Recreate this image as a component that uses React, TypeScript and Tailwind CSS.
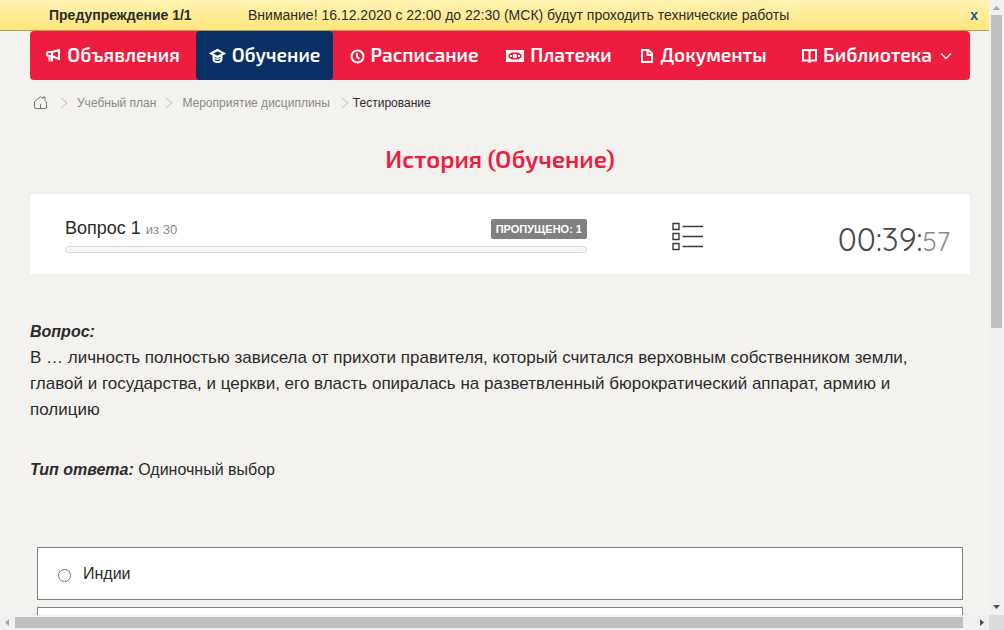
import React from 'react';

interface NavItem {
  label: string;
  icon: React.ReactNode;
  active?: boolean;
  dropdown?: boolean;
}

const iconProps = {
  fill: 'none',
  stroke: 'currentColor',
  strokeWidth: 2,
  className: 'shrink-0',
};

const navItems: NavItem[] = [
  {
    label: 'Объявления',
    icon: (
      <svg width="15" height="16" viewBox="0 0 15 16" {...iconProps}>
        <path d="M6 4H3a2 2 0 0 0 0 4h3zM6 4l7-2v9L6 8M3.500 8v5.500M6 8v5.500" />
      </svg>
    ),
  },
  {
    label: 'Обучение',
    active: true,
    icon: (
      <svg width="17" height="16" viewBox="0 0 17 16" {...iconProps}>
        <path d="M2 5.500L8.500 2l6.500 3.500L8.500 9zM4.500 7v4q0 3 4 3t4-3V7" />
        <path d="M5 10q3.500 2.500 7 0" strokeWidth="1.400" />
      </svg>
    ),
  },
  {
    label: 'Расписание',
    icon: (
      <svg width="15" height="16" viewBox="0 0 15 16" {...iconProps}>
        <circle cx="7.5" cy="8.5" r="6" />
        <path d="M7 5v3.800l2.500 2.200" />
      </svg>
    ),
  },
  {
    label: 'Платежи',
    icon: (
      <svg width="18" height="16" viewBox="0 0 18 16" {...iconProps}>
        <path
          d="M0 2h18v12H0zM5 4.500Q4.500 6 2.500 6.500v3Q4.500 10 5 11.500h8q.5-1.500 2.500-2v-3Q13.500 6 13 4.500z"
          fill="currentColor"
          fillRule="evenodd"
          stroke="none"
        />
        <circle cx="9" cy="8" r="2.200" fill="currentColor" stroke="none" />
        <path d="M4 8h2M12 8h2" />
      </svg>
    ),
  },
  {
    label: 'Документы',
    icon: (
      <svg width="14" height="16" viewBox="0 0 14 16" {...iconProps}>
        <path d="M2 2h6.500L12 5.500V14H2zM7.500 2v5H12" />
      </svg>
    ),
  },
  {
    label: 'Библиотека',
    dropdown: true,
    icon: (
      <svg width="15" height="16" viewBox="0 0 15 16" {...iconProps}>
        <path d="M1 2h4.500q2 0 2 1.500 0-1.500 2-1.500H14v10.500H9.500q-2 0-2 1.500 0-1.500-2-1.500H1zM7.500 3v12" />
      </svg>
    ),
  },
];

const Separator = () => (
  <svg width="8" height="12" viewBox="0 0 8 12" fill="none" stroke="#bbb" className="shrink-0">
    <path d="M1 1l6 5-6 5" />
  </svg>
);

const Notice = () => (
  <div className="flex h-[31px] items-center border-b border-[#b3a04a] bg-gradient-to-b from-[#fff3b3] to-[#ffe67a] pr-[11px] pl-[49px] text-sm">
    <b className="w-[199px] shrink-0">Предупреждение 1/1</b>
    <span className="grow whitespace-nowrap">
      Внимание! 16.12.2020 с 22:00 до 22:30 (МСК) будут проходить технические работы
    </span>
    <button type="button" className="font-bold text-[#155a96]">x</button>
  </div>
);

const MainNav = () => (
  <nav className="grid h-[49px] grid-cols-[166fr_137fr_162fr_128fr_161fr_186fr] rounded bg-[#ee1c3f] font-['Exo_2','Open_Sans',sans-serif] text-[19px] font-semibold text-white">
    {navItems.map((item) => (
      <a
        key={item.label}
        href="#"
        className={`flex min-w-0 items-center justify-center gap-1.5 rounded ${item.active ? 'bg-[#083064]' : ''}`}
      >
        {item.icon}
        <span>{item.label}</span>
        {item.dropdown && (
          <svg width="12" height="8" viewBox="0 0 12 8" fill="none" stroke="currentColor" strokeWidth="1.3" className="ml-0.5 shrink-0">
            <path d="M1 1.500l5 5 5-5" />
          </svg>
        )}
      </a>
    ))}
  </nav>
);

const Breadcrumbs = () => (
  <div className="flex h-[46px] items-center gap-[9px] pl-1 text-xs text-[#8a8a8a]">
    <a href="#" aria-label="Главная" className="mr-1">
      <svg width="13" height="13" viewBox="0 0 13 13" fill="none" stroke="#777" className="mb-0.5">
        <path d="M.5 5.500 6 1q.5-.5 1 0l2 1.500V1h2v3.500l1.500 1.500v5q0 1.500-1.500 1.500H2Q.5 12.500.5 11zM6.500 12.500V8" />
      </svg>
    </a>
    <Separator />
    <a href="#">Учебный план</a>
    <Separator />
    <a href="#" className="mr-0.5">Мероприятие дисциплины</a>
    <span className="flex items-center gap-1 text-[#2b2b2b]">
      <Separator />
      Тестирование
    </span>
  </div>
);

const ProgressPanel = () => (
  <section className="grid h-20 grid-cols-[522fr_201fr_162fr] items-center bg-white pr-5 pl-[35px]">
    <div className="pt-0.5">
      <div className="flex items-center justify-between">
        <div className="text-lg leading-5">
          Вопрос 1 <span className="text-[13px] text-[#888]">из 30</span>
        </div>
        <span className="rounded-[2px] bg-[#808080] px-[5px] text-[11px] leading-5 font-bold text-white">
          ПРОПУЩЕНО: 1
        </span>
      </div>
      <div
        role="progressbar"
        aria-valuenow={0}
        className="mt-1.5 h-[7px] rounded-full border border-[#d9d9d9] bg-[#f7f7f7]"
      />
    </div>
    <button type="button" aria-label="Список вопросов" className="mt-1 justify-self-center">
      <svg width="32" height="30" viewBox="0 0 32 30" fill="none" stroke="#3b3b3b" strokeWidth="1.4">
        <path d="M1 2.500h6v6H1zM1 12.500h6v6H1zM1 22.500h6v6H1zM10.500 5.500h20.500M10.500 15.500h20.500M10.500 25.500h20.500" />
      </svg>
    </button>
    <div className="mt-3 text-right font-['Quicksand','Lato',sans-serif] text-[32px] leading-8 font-normal text-[#4a4a4a]">
      00:39:<span className="text-[26px] text-[#8a8a8a]">57</span>
    </div>
  </section>
);

const VerticalScrollbar = () => (
  <div className="flex w-[15px] shrink-0 flex-col items-center bg-[#f0f0f0]">
    <svg width="15" height="15" viewBox="0 0 15 15" className="shrink-0">
      <path d="M4 10l3.500-4L11 10z" fill="#a3a3a3" />
    </svg>
    <div className="grid w-[11px] grow grid-rows-[313fr_272fr]">
      <div className="bg-[#c0c0c0]" />
    </div>
    <svg width="15" height="15" viewBox="0 0 15 15" className="shrink-0">
      <path d="M4 5l3.500 4L11 5z" fill="#505050" />
    </svg>
  </div>
);

const HorizontalScrollbar = () => (
  <div className="flex h-[15px] shrink-0 bg-[#f0f0f0]">
    <svg width="15" height="15" viewBox="0 0 15 15" className="shrink-0">
      <path d="M9 4L5 7.500 9 11z" fill="#a3a3a3" />
    </svg>
    <div className="grid grow grid-cols-[948fr_11fr] items-center">
      <div className="h-[11px] bg-[#c0c0c0]" />
    </div>
    <svg width="15" height="15" viewBox="0 0 15 15" className="shrink-0">
      <path d="M6 4l4 3.500L6 11z" fill="#505050" />
    </svg>
    <div className="w-[15px] bg-[#dcdcdc]" />
  </div>
);

export default function App() {
  return (
    <div className="flex h-screen flex-col overflow-hidden bg-[#f3f2ee] font-['Liberation_Sans',Arial,sans-serif] text-[#2b2b2b]">
      <div className="flex min-h-0 grow">
        <div className="min-w-0 grow overflow-hidden">
          <Notice />
          <main className="pr-[19px] pl-[30px]">
            <MainNav />
            <Breadcrumbs />
            <h1 className="pt-[17px] pb-[19px] text-center font-['Exo_2','Open_Sans',sans-serif] text-2xl font-semibold text-[#ee1c3f]">
              История (Обучение)
            </h1>
            <ProgressPanel />

            {/* Question */}
            <div className="mt-[45px] leading-[26px]">
              <div className="font-bold italic">Вопрос:</div>
              <p className="pr-6 text-[17px]">
                В … личность полностью зависела от прихоти правителя, который считался верховным собственником земли, главой и государства, и церкви, его власть опиралась на разветвленный бюрократический аппарат, армию и полицию
              </p>
              <p className="mt-[34px]">
                <b className="italic">Тип ответа:</b> Одиночный выбор
              </p>
            </div>

            {/* Answers */}
            <div className="mx-[7px] mt-16 flex flex-col gap-[7px]">
              <label className="flex h-[53px] items-center gap-3 border border-[#808080] bg-white px-5">
                <input type="radio" name="answer" className="mt-1 size-[13px]" />
                <span>Индии</span>
              </label>
              <div className="h-[53px] border border-[#808080] bg-white" />
            </div>
          </main>
        </div>
        <VerticalScrollbar />
      </div>
      <HorizontalScrollbar />
    </div>
  );
}
